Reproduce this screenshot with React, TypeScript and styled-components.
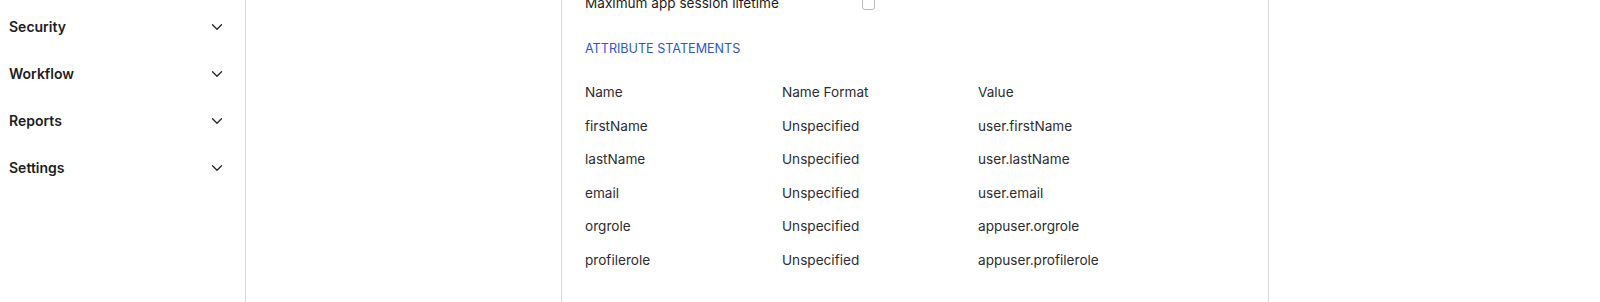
import { createGlobalStyle } from 'styled-components'
import styled from 'styled-components'

const GlobalStyle = createGlobalStyle`
  body {
    margin: 0;
    background: #ffffff;
    font-family: Inter, "Noto Sans", Arial, sans-serif;
  }
`

const Page = styled.div`
  display: flex;
  height: 302px;
  overflow: hidden;
  background: #ffffff;
`

const Sidebar = styled.nav`
  width: 246px;
  flex-shrink: 0;
  border-right: 1px solid #d9d9d9;
  padding-top: 3px;
  box-sizing: border-box;
`

const NavItem = styled.div`
  display: flex;
  align-items: center;
  justify-content: space-between;
  height: 47px;
  padding: 0 22px 0 9px;
  font-size: 14px;
  font-weight: 600;
  color: #1d1d21;
`

const Main = styled.main`
  flex: 1;
  padding-left: 315px;
`

const Panel = styled.section`
  width: 708px;
  box-sizing: border-box;
  height: 320px;
  margin-top: -7px;
  padding: 0 23px;
  border-left: 1px solid #d7d7dc;
  border-right: 1px solid #d7d7dc;
`

const SettingRow = styled.div`
  display: grid;
  grid-template-columns: 277px auto;
  align-items: center;
  height: 20px;
  font-size: 13.6px;
  color: #1d1d21;
`

const Checkbox = styled.span`
  display: block;
  width: 11px;
  height: 11px;
  border: 1px solid #b8b8be;
  border-radius: 3px;
`

const SectionTitle = styled.h3`
  margin: 26px 0 17px;
  line-height: 20px;
  font-size: 12.6px;
  font-weight: 400;
  color: #2e55d8;
  text-transform: uppercase;
`

const Table = styled.div`
  display: grid;
  grid-template-columns: 197px 196px auto;
`

const Cell = styled.div<{ $header?: boolean }>`
  display: flex;
  align-items: center;
  height: 33.4px;
  box-sizing: border-box;
  padding-bottom: ${({ $header }) => ($header ? '2px' : '0')};
  font-size: 13.6px;
  color: #2c2c30;
`

const Chevron = () => (
  <svg width="12" height="8" viewBox="0 0 12 8" fill="none">
    <path d="M1.5 1.75L6 6.25L10.5 1.75" stroke="#2a2a2e" strokeWidth="1.4" strokeLinecap="round" strokeLinejoin="round" />
  </svg>
)

const navItems = ['Security', 'Workflow', 'Reports', 'Settings']

const columns = ['Name', 'Name Format', 'Value']

const attributes = [
  ['firstName', 'Unspecified', 'user.firstName'],
  ['lastName', 'Unspecified', 'user.lastName'],
  ['email', 'Unspecified', 'user.email'],
  ['orgrole', 'Unspecified', 'appuser.orgrole'],
  ['profilerole', 'Unspecified', 'appuser.profilerole'],
]

export default function App() {
  return (
    <>
      <GlobalStyle />
      <Page>
        <Sidebar>
          {navItems.map((item) => (
            <NavItem key={item}>
              <span>{item}</span>
              <Chevron />
            </NavItem>
          ))}
        </Sidebar>
        <Main>
          <Panel>
            <SettingRow>
              <span>Maximum app session lifetime</span>
              <Checkbox />
            </SettingRow>
            <SectionTitle>Attribute Statements</SectionTitle>
            <Table>
              {columns.map((col) => (
                <Cell key={col} $header>
                  {col}
                </Cell>
              ))}
              {attributes.flat().map((text, i) => (
                <Cell key={i}>{text}</Cell>
              ))}
            </Table>
          </Panel>
        </Main>
      </Page>
    </>
  )
}
